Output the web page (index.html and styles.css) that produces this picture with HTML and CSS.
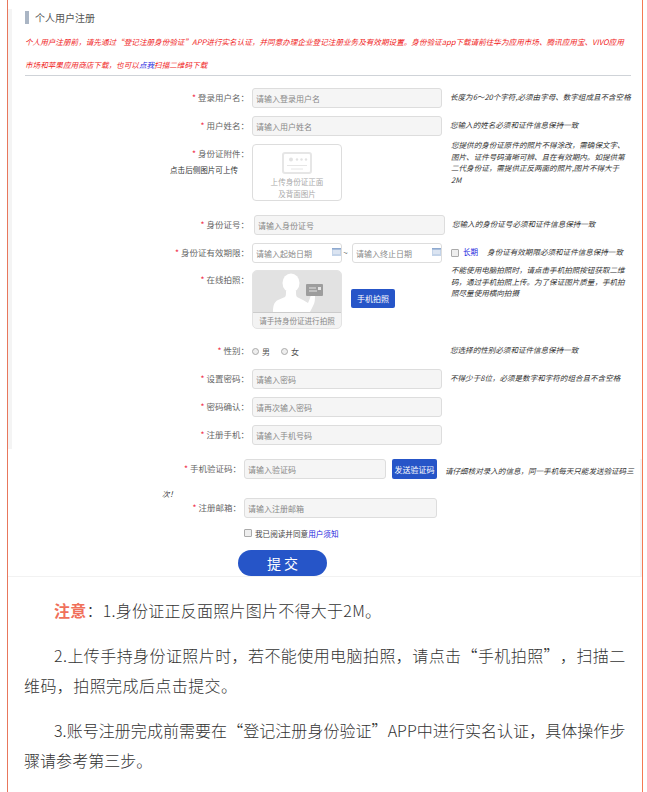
FILE: index.html
```html
<!DOCTYPE html>
<html lang="zh-CN">
<head>
    <meta charset="UTF-8">
    <meta name="viewport" content="width=device-width, initial-scale=1.0">
    <title>个人用户注册</title>
    <link rel="stylesheet" href="styles.css">
</head>
<body>

<div class="page">
    <div class="form-top">
        <h2 class="title">个人用户注册</h2>
        <p class="notice">个人用户注册前，请先通过“登记注册身份验证”APP进行实名认证，并同意办理企业登记注册业务及有效期设置。身份验证app下载请前往华为应用市场、腾讯应用宝、VIVO应用市场和苹果应用商店下载，也可以<a href="#">点我</a>扫描二维码下载</p>

        <div class="row row-login">
            <label class="label"><i>*</i> 登录用户名：</label>
            <input class="input" type="text" placeholder="请输入登录用户名">
            <span class="hint">长度为6～20个字符,必须由字母、数字组成且不含空格</span>
        </div>
        <div class="row row-name">
            <label class="label"><i>*</i> 用户姓名：</label>
            <input class="input" type="text" placeholder="请输入用户姓名">
            <span class="hint">您输入的姓名必须和证件信息保持一致</span>
        </div>
        <div class="row row-upload">
            <div class="label">
                <label><i>*</i> 身份证附件：</label>
                <div class="label-note">点击后侧图片可上传</div>
            </div>
            <div class="upload">
                <svg class="upload-icon" viewBox="0 0 30 22">
                    <rect x="1" y="1" width="28" height="20" rx="2" fill="none" stroke="#e6e6e6" stroke-width="2"/>
                    <circle cx="9" cy="7.5" r="2" fill="#e2e2e2"/>
                    <circle cx="15" cy="7.5" r="1.2" fill="#e2e2e2"/>
                    <circle cx="19.5" cy="7.5" r="1.2" fill="#e2e2e2"/>
                    <circle cx="24" cy="7.5" r="1.2" fill="#e2e2e2"/>
                    <path d="M5 13.5h20M9 17h12" stroke="#e6e6e6" stroke-width="1" fill="none"/>
                </svg>
                <div>上传身份证正面</div>
                <div>及背面图片</div>
            </div>
            <span class="hint hint-block hint-upload">您提供的身份证原件的照片不得涂改，需确保文字、图片、证件号码清晰可辨、且在有效期内。如提供第二代身份证，需提供正反两面的照片,图片不得大于2M</span>
        </div>
        <div class="row row-id">
            <label class="label"><i>*</i> 身份证号：</label>
            <input class="input" type="text" placeholder="请输入身份证号">
            <span class="hint">您输入的身份证号必须和证件信息保持一致</span>
        </div>
        <div class="row row-date">
            <label class="label"><i>*</i> 身份证有效期限：</label>
            <div class="date">
                <input type="text" placeholder="请输入起始日期">
                <svg class="cal" viewBox="0 0 9 8"><rect width="9" height="8" fill="#c3d3e8"/><rect width="9" height="1.5" fill="#8ea9cf"/><path d="M1 3h7M1 5h7" stroke="#fff" stroke-width=".8"/></svg>
            </div>
            <span class="tilde">~</span>
            <div class="date">
                <input type="text" placeholder="请输入终止日期">
                <svg class="cal" viewBox="0 0 9 8"><rect width="9" height="8" fill="#c3d3e8"/><rect width="9" height="1.5" fill="#8ea9cf"/><path d="M1 3h7M1 5h7" stroke="#fff" stroke-width=".8"/></svg>
            </div>
            <input class="check" type="checkbox">
            <a class="long" href="#">长期</a>
            <span class="hint hint-long">身份证有效期限必须和证件信息保持一致</span>
        </div>
        <div class="row row-photo">
            <label class="label"><i>*</i> 在线拍照：</label>
            <div class="photo">
                <div class="photo-pic">
                    <svg viewBox="0 0 88 41">
                        <ellipse cx="38" cy="12" rx="8.5" ry="9.5" fill="#fff"/>
                        <path d="M20 41c0-6 1-10 5-12l7-3c1-1 1-3 1-6h10c0 3 0 5 1 6l6 3 5 3c1-2 2-5 3-8h4c0 4 0 8-2 11l-3 6z" fill="#fff"/>
                        <rect x="53" y="13" width="17" height="12" rx="1" fill="#9d9d9d"/>
                        <path d="M56 17h7M56 20h8" stroke="#e4e4e4" stroke-width="1"/>
                        <rect x="65" y="16" width="3" height="3" fill="#e4e4e4"/>
                    </svg>
                </div>
                <div class="photo-cap">请手持身份证进行拍照</div>
            </div>
            <button class="btn btn-photo" type="button">手机拍照</button>
            <span class="hint hint-block hint-photo">不能使用电脑拍照时，请点击手机拍照按钮获取二维码，通过手机拍照上传。为了保证图片质量，手机拍照尽量使用横向拍摄</span>
        </div>
        <div class="row row-sex">
            <label class="label"><i>*</i> 性别：</label>
            <div class="sex">
                <span class="radio"></span><span>男</span>
                <span class="radio radio-next"></span><span>女</span>
            </div>
            <span class="hint">您选择的性别必须和证件信息保持一致</span>
        </div>
        <div class="row row-pwd">
            <label class="label"><i>*</i> 设置密码：</label>
            <input class="input" type="password" placeholder="请输入密码">
            <span class="hint">不得少于8位，必须是数字和字符的组合且不含空格</span>
        </div>
        <div class="row row-confirm">
            <label class="label"><i>*</i> 密码确认：</label>
            <input class="input" type="password" placeholder="请再次输入密码">
        </div>
        <div class="row row-mobile">
            <label class="label"><i>*</i> 注册手机：</label>
            <input class="input" type="text" placeholder="请输入手机号码">
        </div>
    </div>

    <div class="form-bottom">
        <div class="code-row">
            <label class="label code-label"><i>*</i> 手机验证码：</label><input class="input code-input" type="text" placeholder="请输入验证码"><button class="btn btn-code" type="button">发送验证码</button><span class="hint code-hint">请仔细核对录入的信息，同一手机每天只能发送验证码三次！</span>
        </div>
        <div class="row row-mail">
            <label class="label code-label"><i>*</i> 注册邮箱：</label>
            <input class="input mail-input" type="text" placeholder="请输入注册邮箱">
        </div>
        <div class="agree">
            <input class="check" type="checkbox">
            <span>我已阅读并同意<a href="#">用户须知</a></span>
        </div>
        <button class="submit" type="button">提 交</button>
    </div>

    <div class="notes">
        <p><b>注意</b>：1.身份证正反面照片图片不得大于2M。</p>
        <p class="note-wide">2.上传手持身份证照片时，若不能使用电脑拍照，请点击“手机拍照”，扫描二维码，拍照完成后点击提交。</p>
        <p class="note-tight">3.账号注册完成前需要在“登记注册身份验证”APP中进行实名认证，具体操作步骤请参考第三步。</p>
    </div>
</div>

</body>
</html>
```

FILE: styles.css
```css
html, body {
    height: 100%;
    overflow: hidden;
}

body {
    margin: 0;
    background-color: #fff;
    font-family: "Noto Sans CJK SC", "Liberation Sans", sans-serif;
    color: #666;
    text-spacing-trim: space-all;
}

.page {
    width: 634px;
    height: 783px;
    margin-left: 7px;
    padding-top: 9px;
    border-left: 1px solid #e8775c;
    border-right: 1px solid #f47a52;
}

.form-top {
    box-sizing: border-box;
    height: 440px;
    margin-bottom: 10px;
    padding: 2px 0 0 13px;
    border-left: 4px solid #f4f4f4;
}

.title {
    margin: 0;
    padding-left: 6px;
    border-left: 4px solid #aab5c4;
    font-size: 10px;
    font-weight: normal;
    line-height: 13px;
    color: #555;
}

.notice {
    width: 606px;
    height: 45px;
    margin: 0;
    padding: 6px 0 0;
    border-bottom: 1px solid #cfd3d8;
    font-size: 7.6px;
    line-height: 23px;
    font-style: italic;
    color: #f01c1c;
}

.notice a {
    color: #2222dd;
    text-decoration: none;
}

.row {
    display: flex;
    align-items: flex-start;
}

.label {
    width: 224px;
    flex-shrink: 0;
    text-align: right;
    font-size: 8.5px;
    line-height: 18px;
    color: #666;
}

.label i {
    color: #f0304a;
    font-style: normal;
}

.label-note {
    margin-top: 2px;
    padding-right: 11px;
    font-size: 7.55px;
    line-height: 12px;
    color: #333;
}

.input {
    box-sizing: border-box;
    width: 190px;
    height: 20px;
    margin: 0 0 0 3px;
    padding: 0 3px;
    background-color: #f5f5f5;
    border: 1px solid #ddd;
    border-radius: 3px;
    font-size: 8px;
    font-family: inherit;
}

input::placeholder {
    color: #888;
}

.hint {
    margin-left: 8px;
    font-size: 7.55px;
    line-height: 18px;
    font-style: italic;
    color: #333;
    white-space: nowrap;
}

.hint-block {
    width: 178px;
    white-space: normal;
    line-height: 11.5px;
}

.hint-upload {
    margin: -5px 0 0 109px;
}

.row-login { margin-top: 12px; }
.row-name { margin-top: 8px; }
.row-upload { margin-top: 8px; height: 57px; }
.row-id { margin-top: 14px; }
.row-id .input { width: 191px; margin-left: 5px; }
.row-id .hint { margin-left: 7px; }
.row-date { margin-top: 8px; }
.row-photo { margin-top: 7px; }
.row-sex { margin-top: 12px; }
.row-pwd { margin-top: 8px; }
.row-confirm { margin-top: 8px; }
.row-mobile { margin-top: 8px; }

.upload {
    box-sizing: border-box;
    width: 90px;
    height: 57px;
    margin-left: 3px;
    padding-top: 7px;
    border: 1px solid #ddd;
    border-radius: 4px;
    text-align: center;
    font-size: 7.55px;
    line-height: 11.5px;
    color: #aaa;
}

.upload-icon {
    display: block;
    width: 30px;
    height: 22px;
    margin: 0 auto 2px;
}

.date {
    position: relative;
    width: 90px;
    height: 20px;
    margin-left: 3px;
}

.date input {
    display: block;
    box-sizing: border-box;
    width: 100%;
    height: 100%;
    padding: 0 3px;
    background-color: #fff;
    border: 1px solid #ddd;
    border-radius: 3px;
    font-size: 8px;
    font-family: inherit;
}

.cal {
    position: absolute;
    top: 5px;
    right: 1px;
    width: 9px;
    height: 8px;
}

.tilde {
    width: 7px;
    text-align: center;
    font-size: 8px;
    line-height: 20px;
}

.check {
    appearance: none;
    box-sizing: border-box;
    width: 8px;
    height: 8px;
    margin: 6px 0 0 9px;
    background-color: #eee;
    border: 1px solid #aaa;
    border-radius: 1px;
}

.long {
    margin-left: 4px;
    font-size: 7.55px;
    line-height: 18px;
    color: #2222dd;
    text-decoration: none;
}

.hint-long {
    margin-left: 9px;
}

.photo {
    box-sizing: border-box;
    width: 90px;
    height: 59px;
    margin-left: 3px;
    overflow: hidden;
    background-color: #f3f3f3;
    border: 1px solid #e3e3e3;
    border-radius: 5px;
}

.photo-pic {
    height: 41px;
    background-color: #e2e2e2;
    border-bottom: 1px solid #ccc;
}

.photo-pic svg {
    display: block;
    width: 88px;
    height: 41px;
}

.photo-cap {
    text-align: center;
    font-size: 7.55px;
    line-height: 15px;
    color: #888;
}

.btn {
    padding: 0;
    background-color: #2655c8;
    border: none;
    border-radius: 2px;
    color: #fff;
    font-family: inherit;
}

.btn-photo {
    width: 44px;
    height: 19px;
    margin: 19px 0 0 9px;
    font-size: 8px;
}

.hint-photo {
    margin: -6px 0 0 56px;
}

.sex {
    display: flex;
    align-items: center;
    width: 190px;
    height: 20px;
    margin-left: 3px;
    font-size: 8px;
    color: #555;
}

.radio {
    box-sizing: border-box;
    width: 7px;
    height: 7px;
    margin-right: 3px;
    background-color: #eee;
    border: 1px solid #aaa;
    border-radius: 50%;
}

.radio-next {
    margin-left: 11px;
}

.form-bottom {
    box-sizing: border-box;
    height: 118px;
    padding-left: 154px;
    border-right: 2px solid #f4f4f4;
    border-bottom: 1px solid #f2f2f2;
}

.code-row {
    width: 480px;
    font-size: 7.55px;
    line-height: 23px;
}

.code-label {
    display: inline-block;
    width: 79px;
    vertical-align: top;
}

.code-input {
    width: 142px;
    vertical-align: top;
}

.btn-code {
    width: 45px;
    height: 20px;
    margin-left: 6px;
    font-size: 8px;
    vertical-align: top;
}

.code-hint {
    margin-left: 8px;
    line-height: 23px;
    white-space: normal;
}

.row-mail {
    margin-top: -7px;
}

.mail-input {
    width: 193px;
}

.agree {
    display: flex;
    align-items: center;
    height: 12px;
    margin: 9px 0 0 82px;
    font-size: 7.6px;
    color: #444;
}

.agree .check {
    margin: 0 3px 0 0;
}

.agree a {
    color: #2222dd;
    text-decoration: none;
}

.submit {
    display: block;
    width: 89px;
    height: 26px;
    margin: 11px 0 0 76px;
    background-color: #2655c8;
    border: none;
    border-radius: 13px;
    color: #fff;
    font-family: "Noto Sans CJK SC", sans-serif;
    font-size: 14px;
}

.notes {
    padding: 18px 11px 0 16px;
    font-size: 16px;
    line-height: 30.6px;
    font-weight: 300;
    letter-spacing: .25px;
    color: #333;
}

.notes p {
    margin: 0 0 14px;
    text-indent: 30px;
}

.notes .note-wide {
    letter-spacing: .42px;
}

.notes .note-tight {
    letter-spacing: .05px;
}

.notes b {
    color: #f0705a;
    font-weight: bold;
}
```
